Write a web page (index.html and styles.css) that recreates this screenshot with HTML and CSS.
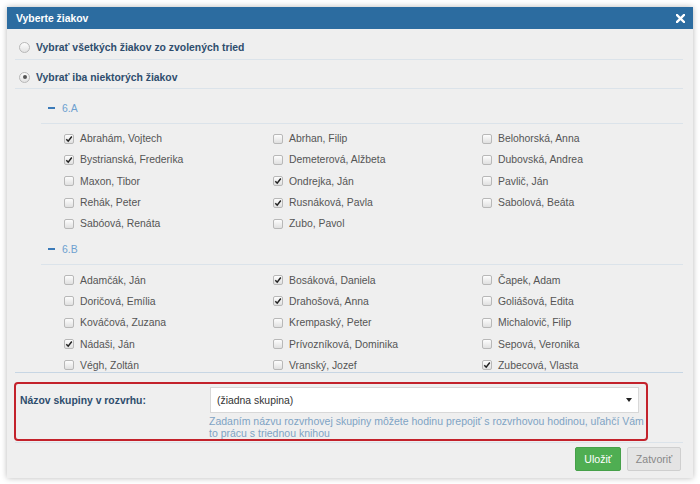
FILE: index.html
```html
<!DOCTYPE html>
<html lang="sk">
<head>
<meta charset="utf-8">
<link rel="stylesheet" href="styles.css">
</head>
<body>
<div class="dialog">
  <div class="dlg-head">
    <span class="dlg-title">Vyberte žiakov</span>
    <svg class="close" width="9" height="9" viewBox="0 0 9 9"><path d="M1 1L8 8M8 1L1 8" stroke="#fff" stroke-width="2.4" stroke-linecap="square"/></svg>
  </div>
  <div class="dlg-body">
    <div class="opt opt1"><span class="radio"></span><span class="opt-label">Vybrať všetkých žiakov zo zvolených tried</span></div>
    <div class="opt opt2"><span class="radio on"></span><span class="opt-label">Vybrať iba niektorých žiakov</span></div>
    <div class="scroll">
      <div class="group">
        <div class="grp-head"><span class="dash"></span><span class="grp-name">6.A</span></div>
        <div class="grid">
          <div class="item"><span class="cb on"><svg width="8" height="8" viewBox="0 0 8 8"><path d="M1.3 4.2L3.2 6.2L6.8 1.5" fill="none" stroke="#222" stroke-width="1.5"/></svg></span>Abrahám, Vojtech</div>
          <div class="item"><span class="cb"></span>Abrhan, Filip</div>
          <div class="item"><span class="cb"></span>Belohorská, Anna</div>
          <div class="item"><span class="cb on"><svg width="8" height="8" viewBox="0 0 8 8"><path d="M1.3 4.2L3.2 6.2L6.8 1.5" fill="none" stroke="#222" stroke-width="1.5"/></svg></span>Bystrianská, Frederika</div>
          <div class="item"><span class="cb"></span>Demeterová, Alžbeta</div>
          <div class="item"><span class="cb"></span>Dubovská, Andrea</div>
          <div class="item"><span class="cb"></span>Maxon, Tibor</div>
          <div class="item"><span class="cb on"><svg width="8" height="8" viewBox="0 0 8 8"><path d="M1.3 4.2L3.2 6.2L6.8 1.5" fill="none" stroke="#222" stroke-width="1.5"/></svg></span>Ondrejka, Ján</div>
          <div class="item"><span class="cb"></span>Pavlič, Ján</div>
          <div class="item"><span class="cb"></span>Rehák, Peter</div>
          <div class="item"><span class="cb on"><svg width="8" height="8" viewBox="0 0 8 8"><path d="M1.3 4.2L3.2 6.2L6.8 1.5" fill="none" stroke="#222" stroke-width="1.5"/></svg></span>Rusnáková, Pavla</div>
          <div class="item"><span class="cb"></span>Sabolová, Beáta</div>
          <div class="item"><span class="cb"></span>Sabóová, Renáta</div>
          <div class="item"><span class="cb"></span>Zubo, Pavol</div>
        </div>
      </div>
      <div class="group">
        <div class="grp-head"><span class="dash"></span><span class="grp-name">6.B</span></div>
        <div class="grid">
          <div class="item"><span class="cb"></span>Adamčák, Ján</div>
          <div class="item"><span class="cb on"><svg width="8" height="8" viewBox="0 0 8 8"><path d="M1.3 4.2L3.2 6.2L6.8 1.5" fill="none" stroke="#222" stroke-width="1.5"/></svg></span>Bosáková, Daniela</div>
          <div class="item"><span class="cb"></span>Čapek, Adam</div>
          <div class="item"><span class="cb"></span>Doričová, Emília</div>
          <div class="item"><span class="cb on"><svg width="8" height="8" viewBox="0 0 8 8"><path d="M1.3 4.2L3.2 6.2L6.8 1.5" fill="none" stroke="#222" stroke-width="1.5"/></svg></span>Drahošová, Anna</div>
          <div class="item"><span class="cb"></span>Goliášová, Edita</div>
          <div class="item"><span class="cb"></span>Kováčová, Zuzana</div>
          <div class="item"><span class="cb"></span>Krempaský, Peter</div>
          <div class="item"><span class="cb"></span>Michalovič, Filip</div>
          <div class="item"><span class="cb on"><svg width="8" height="8" viewBox="0 0 8 8"><path d="M1.3 4.2L3.2 6.2L6.8 1.5" fill="none" stroke="#222" stroke-width="1.5"/></svg></span>Nádaši, Ján</div>
          <div class="item"><span class="cb"></span>Prívozníková, Dominika</div>
          <div class="item"><span class="cb"></span>Sepová, Veronika</div>
          <div class="item"><span class="cb"></span>Végh, Zoltán</div>
          <div class="item"><span class="cb"></span>Vranský, Jozef</div>
          <div class="item"><span class="cb on"><svg width="8" height="8" viewBox="0 0 8 8"><path d="M1.3 4.2L3.2 6.2L6.8 1.5" fill="none" stroke="#222" stroke-width="1.5"/></svg></span>Zubecová, Vlasta</div>
        </div>
      </div>
    </div>
    <div class="hl-box">
      <div class="field-row">
        <label class="field-label">Názov skupiny v rozvrhu:</label>
        <div class="select"><span>(žiadna skupina)</span><span class="caret"></span></div>
      </div>
      <div class="help"><span class="nowrap">Zadaním názvu rozvrhovej skupiny môžete hodinu prepojiť s rozvrhovou hodinou, uľahčí Vám</span> to prácu s triednou knihou</div>
    </div>
    <div class="footer">
      <button class="btn btn-save">Uložiť</button>
      <button class="btn btn-close">Zatvoriť</button>
    </div>
  </div>
</div>
</body>
</html>
```

FILE: styles.css
```css
* { box-sizing: border-box; }
html, body { margin: 0; padding: 0; background: #fff; }
body {
  font-family: "Liberation Sans", Arial, sans-serif;
  font-size: 10.4px;
  color: #555;
  padding: 7px;
}
.dialog {
  width: 686px;
  height: 471px;
  background: #efefef;
  box-shadow: 0 0 6px rgba(0,0,0,0.28);
  display: flex;
  flex-direction: column;
}
.dlg-head {
  height: 22px;
  background: #2c6ca0;
  display: flex;
  align-items: center;
  justify-content: space-between;
  padding: 0 8px 0 9px;
}
.dlg-title { color: #fff; font-weight: bold; font-size: 10.4px; }
.close { display: block; }
.dlg-body {
  padding: 0 10px 0 8px;
  display: flex;
  flex-direction: column;
  flex: 1;
}
.opt {
  display: flex;
  align-items: center;
  height: 14px;
  box-sizing: content-box;
  border-bottom: 1px solid #dbe3ea;
}
.opt1 { padding: 11px 0 5px; }
.opt2 { padding: 10px 0 4px; }
.radio {
  width: 11px; height: 11px;
  margin-left: 4px; margin-right: 6px;
  border: 1px solid #b8b8b8;
  border-radius: 50%;
  background: linear-gradient(#fdfdfd, #e2e2e2);
  position: relative;
}
.radio.on::after {
  content: "";
  position: absolute;
  left: 2.5px; top: 2.5px;
  width: 4px; height: 4px;
  border-radius: 50%;
  background: #555;
}
.opt-label { font-weight: bold; color: #2e4d6d; font-size: 10.4px; }
.scroll {
  height: 284px;
  overflow: hidden;
  padding-top: 4px;
  border-bottom: 1px solid #c7d6e4;
}
.group { margin-left: 26px; }
.grp-head {
  display: flex;
  align-items: center;
  height: 14px;
  box-sizing: content-box;
  padding: 8px 0 8px;
  border-bottom: 1px solid #dbe3ea;
}
.dash {
  width: 7px; height: 2px;
  background: #3b7ab8;
  margin-left: 7px; margin-right: 7px;
}
.grp-name { color: #6d9fd0; font-size: 10.4px; }
.grid {
  display: grid;
  grid-template-columns: 209px 209px 209px;
  grid-auto-rows: 21.3px;
  padding: 4px 0 0 23px;
}
.item {
  display: flex;
  align-items: center;
  color: #555;
  font-size: 10.4px;
  white-space: nowrap;
}
.cb {
  width: 10px; height: 10px;
  border: 1px solid #b8b8b8;
  border-radius: 2px;
  background: linear-gradient(#fdfdfd, #e0e0e0);
  margin-right: 6px;
  display: flex;
  align-items: center;
  justify-content: center;
  flex: none;
}
.cb svg { display: block; }
.hl-box {
  margin: 9px 0 0 -1px;
  width: 634px;
  height: 59px;
  border: 2px solid #c3222b;
  border-radius: 4px;
  padding: 3px 7px 0 4px;
}
.field-row {
  display: flex;
  align-items: center;
}
.field-label {
  width: 190px;
  font-weight: bold;
  color: #2e4d6d;
  font-size: 10.4px;
}
.select {
  flex: 1;
  height: 26px;
  background: #fff;
  border: 1px solid #d8d8d8;
  display: flex;
  align-items: center;
  justify-content: space-between;
  padding: 0 6px 0 6px;
  color: #333;
  font-size: 10.4px;
}
.caret {
  width: 0; height: 0;
  border-left: 3.5px solid transparent;
  border-right: 3.5px solid transparent;
  border-top: 4px solid #222;
}
.help {
  margin-left: 189px;
  margin-right: -6px;
  color: #7ea3c4;
  font-size: 10.5px;
  line-height: 12px;
  padding-top: 2px;
}
.nowrap { white-space: nowrap; }
.footer {
  border-top: 1px solid #dbe3ea;
  margin-top: 1px;
  display: flex;
  justify-content: flex-end;
  gap: 6px;
  padding: 4px 2px 0 0;
}
.btn {
  height: 24px;
  font-family: "Liberation Sans", Arial, sans-serif;
  font-size: 10.6px;
  border-radius: 2px;
  padding: 0;
}
.btn-save {
  width: 46px;
  background: #4fae52;
  border: 1px solid #46a049;
  color: #fff;
}
.btn-close {
  width: 54px;
  background: #e4e4e4;
  border: 1px solid #cfcfcf;
  color: #888;
}
```
